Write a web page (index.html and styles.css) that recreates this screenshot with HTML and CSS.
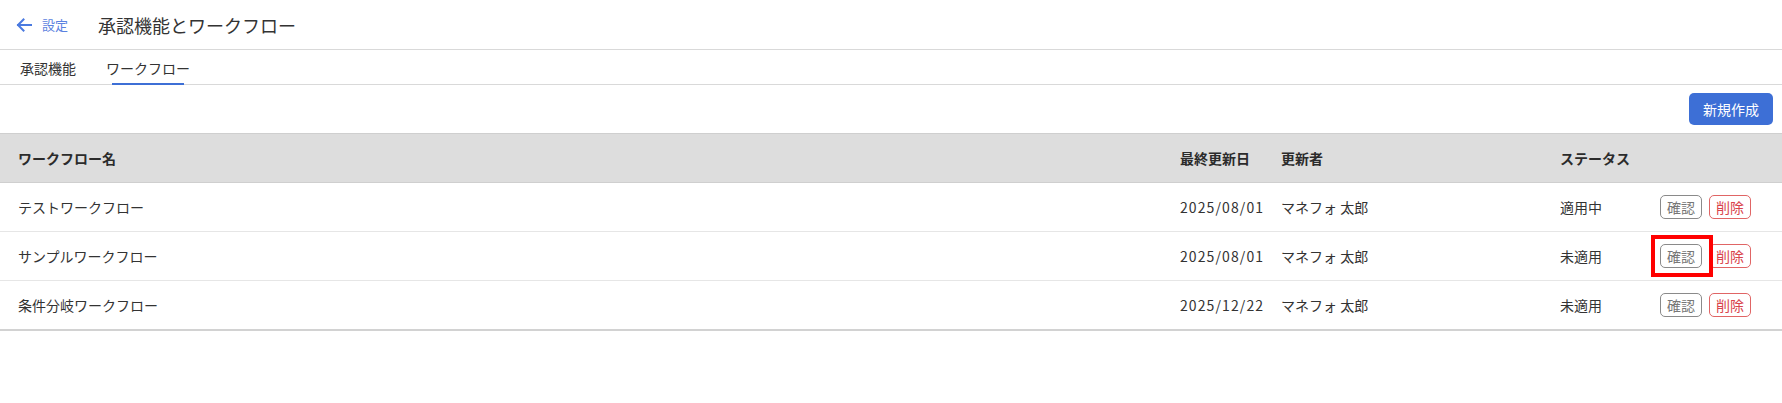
FILE: index.html
```html
<!DOCTYPE html>
<html lang="ja">
<head>
<meta charset="utf-8">
<title>承認機能とワークフロー</title>
<link rel="stylesheet" href="styles.css">
</head>
<body>
<header class="topbar">
  <a class="back">
    <svg class="back-icon" width="16" height="14" viewBox="0 0 16 14"><path d="M15 7H2M7.5 1.5L2 7l5.5 5.5" fill="none" stroke="#4a7ae0" stroke-width="2" stroke-linecap="square"/></svg>
    <span class="back-label">設定</span>
  </a>
  <h1 class="title">承認機能とワークフロー</h1>
</header>
<nav class="tabs">
  <div class="tab"><span class="tab-text">承認機能</span></div>
  <div class="tab active"><span class="tab-text">ワークフロー</span><span class="tab-line"></span></div>
</nav>
<div class="toolbar">
  <button class="btn-primary">新規作成</button>
</div>
<div class="table">
  <div class="row head">
    <div class="cell name">ワークフロー名</div>
    <div class="cell">最終更新日</div>
    <div class="cell">更新者</div>
    <div class="cell">ステータス</div>
    <div class="cell"></div>
  </div>
  <div class="row">
    <div class="cell name">テストワークフロー</div>
    <div class="cell date">2025/08/01</div>
    <div class="cell">マネフォ 太郎</div>
    <div class="cell">適用中</div>
    <div class="cell actions"><button class="btn-sm confirm">確認</button><button class="btn-sm delete">削除</button></div>
  </div>
  <div class="row">
    <div class="cell name">サンプルワークフロー</div>
    <div class="cell date">2025/08/01</div>
    <div class="cell">マネフォ 太郎</div>
    <div class="cell">未適用</div>
    <div class="cell actions"><button class="btn-sm confirm">確認</button><button class="btn-sm delete">削除</button></div>
  </div>
  <div class="row last">
    <div class="cell name">条件分岐ワークフロー</div>
    <div class="cell date">2025/12/22</div>
    <div class="cell">マネフォ 太郎</div>
    <div class="cell">未適用</div>
    <div class="cell actions"><button class="btn-sm confirm">確認</button><button class="btn-sm delete">削除</button></div>
  </div>
</div>
<div class="highlight"></div>
</body>
</html>
```
FILE: styles.css
```css
* { box-sizing: border-box; }
html, body { margin: 0; padding: 0; background: #fff; }
body {
  font-family: "Noto Sans CJK JP", "Noto Sans", sans-serif;
  color: #333;
  font-size: 14px;
  position: relative;
  width: 1782px;
  height: 403px;
  overflow: hidden;
}
.topbar {
  height: 50px;
  border-bottom: 1px solid #d9d9d9;
  display: flex;
  align-items: center;
  padding-left: 16px;
}
.back { display: flex; align-items: center; text-decoration: none; }
.back-icon { display: block; margin-right: 10px; }
.back-label { font-size: 13px; color: #5b82e0; line-height: 1; }
.title {
  margin: 0 0 0 30px;
  font-size: 18px;
  font-weight: 400;
  color: #333;
  line-height: 1;
}
.tabs {
  height: 35px;
  border-bottom: 1px solid #d9d9d9;
  display: flex;
  padding-left: 20px;
  gap: 30px;
}
.tab {
  display: flex;
  flex-direction: column;
  justify-content: flex-end;
  height: 34px;
  font-size: 14px;
  color: #333;
}
.tab-text { line-height: 20px; padding-bottom: 6px; }
.tab.active .tab-text { padding-bottom: 5px; }
.tab-line {
  display: block;
  height: 2px;
  background: #3d6fd6;
  margin: 0 6px -1px;
}
.toolbar {
  height: 48px;
  display: flex;
  justify-content: flex-end;
  align-items: flex-start;
  padding: 8px 9px 0 0;
}
.btn-primary {
  height: 32px;
  width: 84px;
  border: none;
  border-radius: 5px;
  background: #3d6fd6;
  color: #fff;
  font-family: inherit;
  font-size: 14px;
  padding: 0;
}
.table { width: 100%; }
.row {
  display: grid;
  grid-template-columns: 1fr 101px 279px 100px 122px;
  align-items: center;
  height: 49px;
  border-bottom: 1px solid #e6e6e6;
}
.row.head {
  height: 50px;
  background: #dddddd;
  border-top: 1px solid #cfcfcf;
  border-bottom: 1px solid #cfcfcf;
  font-weight: 700;
  color: #2b2b2b;
}
.row.last { border-bottom: 2px solid #d2d2d2; height: 50px; }
.cell { white-space: nowrap; line-height: 20px; }
.cell.name { padding-left: 18px; }
.cell.date { letter-spacing: 1.1px; }
.actions { display: flex; gap: 7px; }
.btn-sm {
  height: 24px;
  width: 42px;
  padding: 0;
  border-radius: 5px;
  background: #fff;
  font-family: inherit;
  font-size: 14px;
  line-height: 22px;
}
.btn-sm.confirm { border: 1px solid #8a8a8a; color: #777; }
.btn-sm.delete { border: 1px solid #e06565; color: #d9434c; }
.highlight {
  position: absolute;
  left: 1651px;
  top: 235px;
  width: 62px;
  height: 42px;
  border: 4px solid #ff0000;
}
```
